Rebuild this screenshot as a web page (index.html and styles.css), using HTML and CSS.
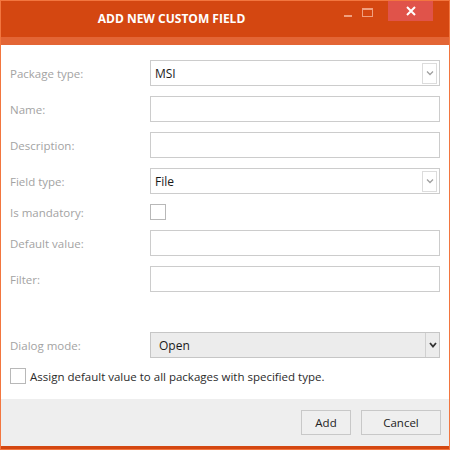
FILE: index.html
```html
<!DOCTYPE html>
<html>
<head>
<meta charset="utf-8">
<link rel="stylesheet" href="styles.css">
</head>
<body>
<div class="window">
  <div class="titlebar">
    <div class="title">ADD NEW CUSTOM FIELD</div>
    <div class="controls">
      <span class="ctl-min"></span>
      <span class="ctl-max"></span>
      <span class="ctl-close">
        <svg width="10" height="10" viewBox="0 0 10 10"><path d="M1 1 L9 9 M9 1 L1 9" stroke="#fff" stroke-width="2"/></svg>
      </span>
    </div>
  </div>
  <div class="strip"></div>
  <div class="content">
    <div class="row">
      <label class="lbl">Package type:</label>
      <div class="select">
        <span class="val">MSI</span>
        <span class="dd">
          <svg width="8" height="6" viewBox="0 0 8 6"><path d="M1 1.5 L4 4.5 L7 1.5" fill="none" stroke="#a0a0a0" stroke-width="1.3"/></svg>
        </span>
      </div>
    </div>
    <div class="row">
      <label class="lbl">Name:</label>
      <div class="input"></div>
    </div>
    <div class="row">
      <label class="lbl">Description:</label>
      <div class="input"></div>
    </div>
    <div class="row">
      <label class="lbl">Field type:</label>
      <div class="select">
        <span class="val">File</span>
        <span class="dd">
          <svg width="8" height="6" viewBox="0 0 8 6"><path d="M1 1.5 L4 4.5 L7 1.5" fill="none" stroke="#a0a0a0" stroke-width="1.3"/></svg>
        </span>
      </div>
    </div>
    <div class="row row-check">
      <label class="lbl">Is mandatory:</label>
      <span class="checkbox"></span>
    </div>
    <div class="row">
      <label class="lbl">Default value:</label>
      <div class="input"></div>
    </div>
    <div class="row row-last">
      <label class="lbl">Filter:</label>
      <div class="input"></div>
    </div>
    <div class="row">
      <label class="lbl">Dialog mode:</label>
      <div class="combo">
        <span class="val">Open</span>
        <span class="combo-dd">
          <svg width="8" height="6" viewBox="0 0 8 6"><path d="M1 1 L4 4.5 L7 1" fill="none" stroke="#333" stroke-width="1.8"/></svg>
        </span>
      </div>
    </div>
    <div class="assign">
      <span class="checkbox"></span>
      <span class="assign-text">Assign default value to all packages with specified type.</span>
    </div>
  </div>
  <div class="footer">
    <button class="btn btn-add">Add</button>
    <button class="btn btn-cancel">Cancel</button>
  </div>
  <div class="bottom"></div>
</div>
</body>
</html>
```

FILE: styles.css
```css
* { box-sizing: border-box; }
html, body { margin: 0; padding: 0; background: #fff; }
body { font-family: "Open Sans", "Noto Sans", sans-serif; }

.window {
  width: 450px;
  height: 450px;
  border: 1px solid #f2763f;
  display: flex;
  flex-direction: column;
  background: #fff;
}

.titlebar {
  height: 36px;
  background: #d44711;
  display: flex;
  align-items: flex-start;
  flex-shrink: 0;
}
.title {
  flex: 1;
  text-align: center;
  color: #fff;
  font-weight: 700;
  font-size: 12px;
  line-height: 35px;
  padding-left: 2px;
}
.controls {
  width: 109px;
  display: flex;
  align-items: flex-start;
  height: 20px;
}
.ctl-min {
  width: 8px;
  height: 2px;
  background: #f0a07f;
  margin: 14px 0 0 4px;
}
.ctl-max {
  width: 11px;
  height: 9px;
  border: 1.5px solid #f0a07f;
  border-top-width: 2px;
  margin: 7px 0 0 10px;
}
.ctl-close {
  width: 45px;
  height: 20px;
  background: #e0534a;
  margin-left: 15px;
  display: flex;
  align-items: center;
  justify-content: center;
}
.ctl-close svg { display: block; }

.strip {
  height: 8px;
  background: #e36535;
  flex-shrink: 0;
}

.content {
  flex: 1;
  padding: 15px 8px 0 9px;
}

.row {
  display: flex;
  align-items: center;
  height: 26px;
  margin-bottom: 10px;
}
.row-check { height: 16px; }
.row-last { margin-bottom: 40px; }

.lbl {
  width: 140px;
  flex-shrink: 0;
  color: #a3a3a3;
  font-size: 11.5px;
}

.input, .select, .combo {
  width: 290px;
  height: 26px;
  border: 1px solid #cccccc;
  background: #fff;
}
.select, .combo {
  display: flex;
  align-items: center;
  justify-content: space-between;
}
.val {
  font-size: 12px;
  color: #1a1a1a;
  padding-left: 4px;
}
.dd {
  width: 15px;
  height: 21px;
  border: 1px solid #dcdcdc;
  margin-right: 2px;
  display: flex;
  align-items: center;
  justify-content: center;
}
.combo {
  background: #ececec;
  border-color: #c6c6c6;
}
.combo .val { padding-left: 8px; }
.combo-dd {
  width: 14px;
  height: 24px;
  border-left: 1px solid #d0d0d0;
  display: flex;
  align-items: center;
  justify-content: center;
}

.checkbox {
  width: 16px;
  height: 16px;
  border: 1.5px solid #b8b8b8;
  background: #fff;
  flex-shrink: 0;
  display: inline-block;
}

.assign {
  display: flex;
  align-items: center;
  margin-top: 10px;
  padding-left: 0;
}
.assign-text {
  font-size: 11.5px;
  color: #2b2b2b;
  margin-left: 4px;
}

.footer {
  height: 47px;
  flex-shrink: 0;
  background: #eeeeee;
  display: flex;
  justify-content: flex-end;
  align-items: center;
  padding-right: 8px;
  gap: 10px;
}
.btn {
  height: 25px;
  border: 1px solid #c8c8c8;
  background: #efefef;
  font-family: inherit;
  font-size: 11.5px;
  color: #222;
  padding: 0;
}
.btn-add { width: 50px; }
.btn-cancel { width: 80px; }

.bottom {
  height: 3px;
  background: #d44711;
  flex-shrink: 0;
}
```
